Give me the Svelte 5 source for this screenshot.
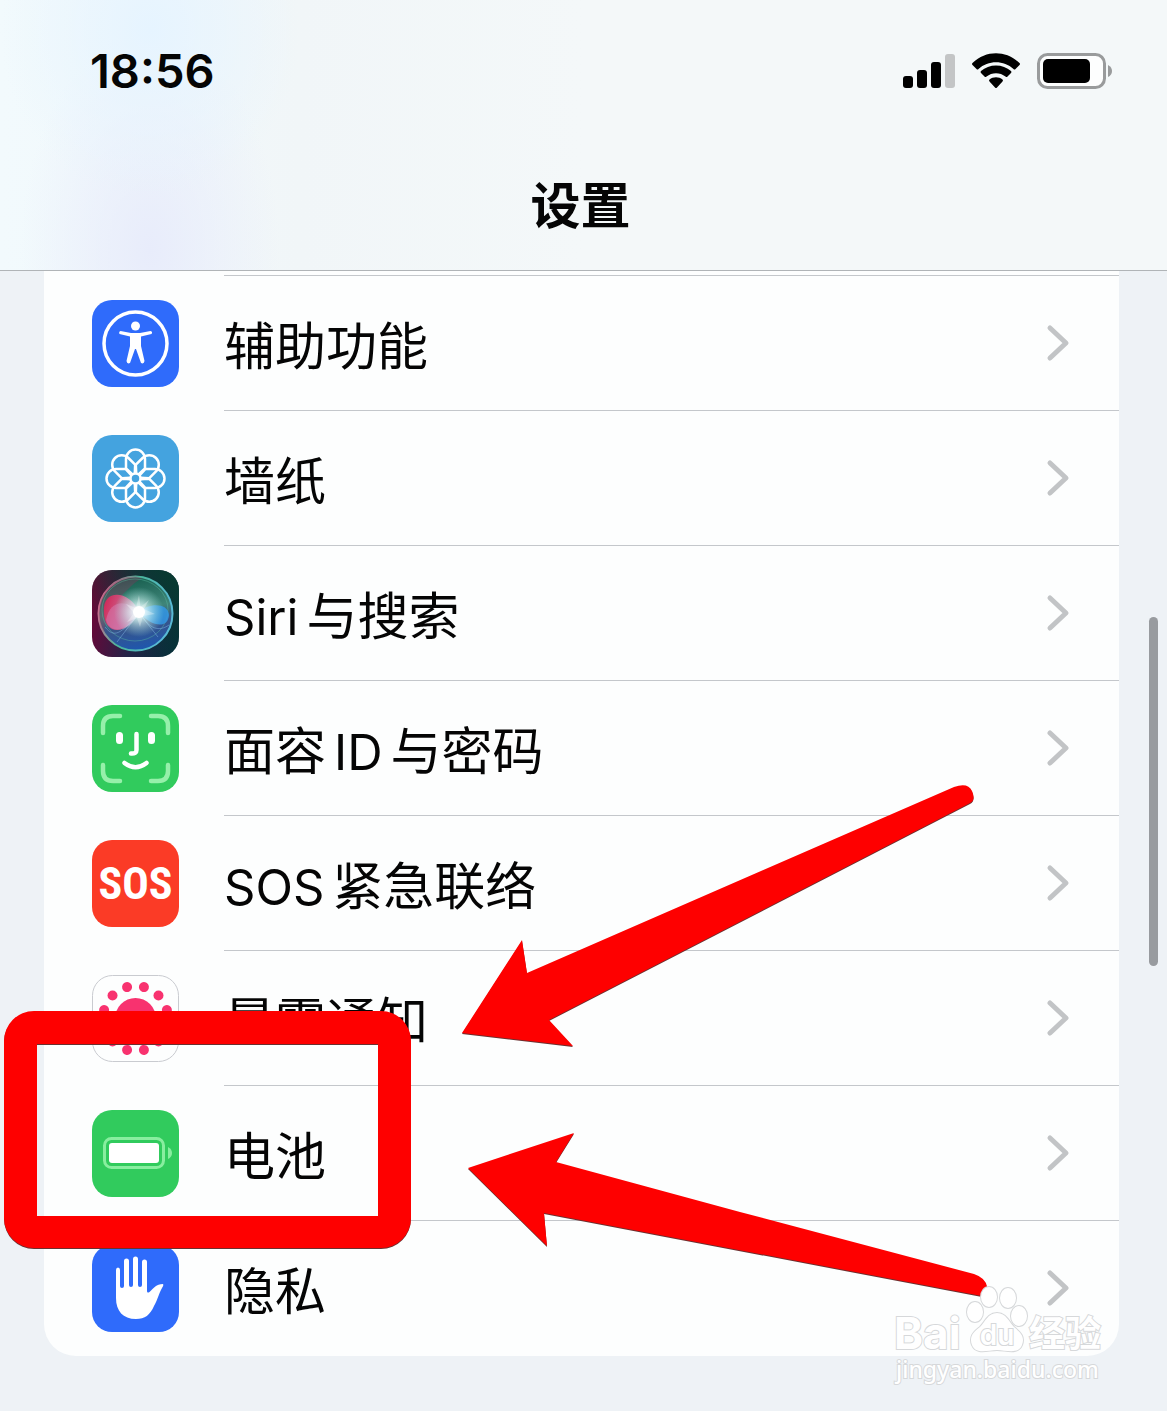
<script lang="ts">
	type Row = { id: string; label: string };

	const rows: Row[] = [
		{ id: 'accessibility', label: '辅助功能' },
		{ id: 'wallpaper', label: '墙纸' },
		{ id: 'siri', label: 'Siri与搜索' },
		{ id: 'faceid', label: '面容ID与密码' },
		{ id: 'sos', label: 'SOS紧急联络' },
		{ id: 'exposure', label: '暴露通知' },
		{ id: 'battery', label: '电池' },
		{ id: 'privacy', label: '隐私' }
	];

	const petals = [0, 45, 90, 135, 180, 225, 270, 315];
	const dots = Array.from({ length: 12 }, (_, i) => 15 + i * 30);

	// split a label into latin and CJK runs so the two get some air between them
	const runs = (label: string) => label.match(/[A-Za-z]+|[^A-Za-z]+/g) ?? [];
</script>

<svelte:head>
	<title>设置</title>
</svelte:head>

<div class="screen">
	<header>
		<div class="status">
			<time>18:56</time>
			<div class="indicators">
				<svg width="52" height="36" viewBox="0 0 52 36" aria-label="signal">
					<rect x="0" y="23" width="10" height="12" rx="3" />
					<rect x="14" y="17" width="10" height="18" rx="3" />
					<rect x="28" y="9" width="10" height="26" rx="3" />
					<rect x="42" y="1" width="10" height="34" rx="3" fill="#c3c5c6" />
				</svg>
				<svg width="50" height="36" viewBox="0 0 50 36" aria-label="wifi">
					<path d="M1.500 12 Q.5 11 1.500 10 C15 -3 35 -3 48.500 10 Q49.500 11 48.500 12 L44.500 16 Q43.500 17 42.500 16 C33 7 17 7 7.500 16 Q6.500 17 5.500 16 Z" />
					<path d="M10 20 Q9 19 10 18 C18 10.500 32 10.500 40 18 Q41 19 40 20 L36.500 23.500 Q35.500 24.500 34.500 23.500 C29 19 21 19 15.500 23.500 Q14.500 24.500 13.500 23.500 Z" />
					<path d="M18.500 28.500 Q17.500 27.500 18.500 26.500 C22 23.500 28 23.500 31.500 26.500 Q32.500 27.500 31.500 28.500 L26 34.500 Q25 35.500 24 34.500 Z" />
				</svg>
				<svg width="76" height="36" viewBox="0 0 76 36" aria-label="battery">
					<rect x="1.500" y="1.500" width="66" height="33" rx="9" fill="#fdfefe" stroke="#999b9c" stroke-width="3" />
					<rect x="6" y="6" width="47" height="24" rx="5" />
					<path d="M71 12 Q75 14 75 18 Q75 22 71 24 Z" fill="#999b9c" />
				</svg>
			</div>
		</div>
		<h1>设置</h1>
	</header>

	<main>
		<ul>
			{#each rows as row (row.id)}
				<li>
					<a href="#{row.id}">
						<svg class="icon" viewBox="0 0 87 87" aria-hidden="true">
							{#if row.id === 'accessibility'}
								<rect width="87" height="87" rx="20" fill="#2f6bfb" />
								<circle cx="43.500" cy="43.500" r="31.500" fill="none" stroke="#fff" stroke-width="3.500" />
								<circle cx="43.500" cy="26" r="4.500" fill="#fff" />
								<path d="M28.500 31 L39 33 H48 L58.500 31 Q61 31.500 59.500 34 L49 36.500 V46 L52.500 61 Q52 64.500 49 63 L44 49 H43 L38 63 Q35 64.500 34.500 61 L38 46 V36.500 L27.500 34 Q26.500 31.500 28.500 31 Z" fill="#fff" />
							{:else if row.id === 'wallpaper'}
								<rect width="87" height="87" rx="20" fill="#44a3df" />
								<g fill="none" stroke="#fff" stroke-width="2.500" stroke-linejoin="round">
									{#each petals as angle}
										<path d="M-3 -4 L-9.500 -10 V-19.500 A9.500 9.500 0 0 1 9.500 -19.500 V-10 L3 -4" transform="translate(43.500 43.500) rotate({angle})" />
									{/each}
									<circle cx="43.500" cy="43.500" r="5" />
								</g>
							{:else if row.id === 'siri'}
								<defs>
									<linearGradient id="siri-bg" x1="0" y1="0.400" x2="1" y2="0.600">
										<stop offset="0" stop-color="#6b0637" />
										<stop offset="0.500" stop-color="#242347" />
										<stop offset="1" stop-color="#082c3d" />
									</linearGradient>
									<linearGradient id="siri-orb" x1="0.400" y1="0" x2="0.600" y2="1">
										<stop offset="0" stop-color="#155c4c" />
										<stop offset="0.450" stop-color="#3f8579" />
										<stop offset="0.650" stop-color="#395487" />
										<stop offset="1" stop-color="#1d57b0" />
									</linearGradient>
									<linearGradient id="siri-ring" x1="0" y1="0" x2="1" y2="0.300">
										<stop offset="0" stop-color="#f0588a" />
										<stop offset="0.500" stop-color="#49b69a" />
										<stop offset="1" stop-color="#58b9d5" />
									</linearGradient>
									<linearGradient id="siri-pink" x1="0" y1="0" x2="1" y2="0.300">
										<stop offset="0" stop-color="#e8174f" />
										<stop offset="1" stop-color="#dc91bd" />
									</linearGradient>
									<linearGradient id="siri-corner" x1="1" y1="0" x2="0.300" y2="0.800">
										<stop offset="0" stop-color="#073b2f" />
										<stop offset="1" stop-color="#073b2f" stop-opacity="0" />
									</linearGradient>
									<radialGradient id="siri-glow">
										<stop offset="0" stop-color="#fff" />
										<stop offset="0.250" stop-color="#eaffff" stop-opacity="0.900" />
										<stop offset="1" stop-color="#a0e8e0" stop-opacity="0" />
									</radialGradient>
								</defs>
								<rect width="87" height="87" rx="20" fill="url(#siri-bg)" />
								<rect width="87" height="87" rx="20" fill="url(#siri-corner)" />
								<circle cx="43.500" cy="43.500" r="37" fill="url(#siri-orb)" stroke="url(#siri-ring)" stroke-width="2" />
								<path d="M11 26 C20 8 38 4 50 8 C36 16 14 40 12 62 C5 50 6 36 11 26 Z" fill="#a02a5e" opacity="0.300" />
								<ellipse cx="43" cy="40" rx="33" ry="31" fill="none" stroke="#5dc0a4" opacity="0.400" />
								<path d="M47 42 C38 20 10 18 12 42 C12 68 38 64 47 42 Z" fill="url(#siri-pink)" opacity="0.850" />
								<path d="M14 50 C18 28 36 30 47 42 C38 60 18 66 14 50 Z" fill="#d77fb5" opacity="0.500" />
								<path d="M47 42 C56 33 76 32 77 45 C76 60 58 56 47 42 Z" fill="#3298e4" opacity="0.850" />
								<path d="M47 43 L25 72 M47 43 L66 67 M47 43 C28 65 22 68 13 57 M49 44 C57 59 67 62 77 55" fill="none" stroke="#91c9f5" opacity="0.400" />
								<circle cx="47" cy="42" r="25" fill="url(#siri-glow)" opacity="0.900" />
								<path d="M47 25 L48.500 37 L57 30 L52 39 L63 44 L51 46 L48 57 L45 48 L35 52 L42 43 L34 34 L44 38 Z" fill="#fff" opacity="0.300" />
								<circle cx="47" cy="42" r="6" fill="#fff" />
							{:else if row.id === 'faceid'}
								<rect width="87" height="87" rx="20" fill="#31cb5d" />
								<path d="M11 28 V21 Q11 11 21 11 H28 M59 11 H66 Q76 11 76 21 V28 M76 60 V66 Q76 76 66 76 H59 M28 76 H21 Q11 76 11 66 V60" fill="none" stroke="#96f0aa" stroke-width="4.500" stroke-linecap="round" />
								<path d="M27.500 30.500 V35.500 M59.500 30.500 V35.500" stroke="#fff" stroke-width="7" stroke-linecap="round" />
								<path d="M44.500 29 V45 Q44.500 49 39 48.500 M32.500 58 Q43.500 66.500 54.500 58" fill="none" stroke="#fff" stroke-width="4.500" stroke-linecap="round" />
							{:else if row.id === 'sos'}
								<rect width="87" height="87" rx="20" fill="#fb3b26" />
								<text class="sos" x="43.500" y="59" text-anchor="middle">SOS</text>
							{:else if row.id === 'exposure'}
								<rect x="0.500" y="0.500" width="86" height="86" rx="20" fill="#fdfefe" stroke="#c9cbd0" />
								<circle cx="43.500" cy="43.500" r="20.500" fill="#f8326f" />
								{#each dots as angle}
									<circle cx="43.500" cy="11" r="5" fill="#f8326f" transform="rotate({angle} 43.500 43.500)" />
								{/each}
							{:else if row.id === 'battery'}
								<rect width="87" height="87" rx="20" fill="#31cb5d" />
								<rect x="12.500" y="28.500" width="59" height="29" rx="7" fill="none" stroke="#88ee9f" stroke-width="3" />
								<rect x="17" y="33" width="50" height="20" rx="3" fill="#fff" />
								<path d="M76 37 Q80 39 80 43 Q80 47 76 49 Z" fill="#88ee9f" />
							{:else}
								<rect width="87" height="87" rx="20" fill="#2f6bfb" />
								<path d="M24 25 Q24 22.500 26 22.500 Q28 22.500 28 25 V41 Q28 43 30 43 Q32 43 32 41 V16 Q32 13.500 34.500 13.500 Q37 13.500 37 16 V40 Q37 42 39 42 Q41 42 41 40 V14 Q41 11.500 43.500 11.500 Q46 11.500 46 14 V40 Q46 42 48 42 Q50 42 50 40 V17 Q50 14.500 52.500 14.500 Q55 14.500 55 17 V46 Q55 48.500 57.500 47 C62 43 64 39 71 39 Q72 40 70 43 C67 48 66 54 62 61 C58 70 53 74 44 74 C31 74 24 66 24 53 Z" fill="#fff" />
							{/if}
						</svg>
						<span class="body">
							<span class="label">
								{#each runs(row.label) as run}<span class:latin={/[A-Za-z]/.test(run)}>{run}</span>{/each}
							</span>
							<svg class="chevron" width="24" height="38" viewBox="0 0 24 38" aria-hidden="true">
								<path d="M4 4 L20 19 L4 34" />
							</svg>
						</span>
					</a>
				</li>
			{/each}
		</ul>
	</main>

	<div class="scrollbar"></div>

	<!-- hand-drawn markup and the watermark lie over the whole page -->
	<svg class="overlay" viewBox="0 0 1167 1411">
		<g class="marks">
			<path fill-rule="evenodd" d="M34 1011 H381 A30 30 0 0 1 411 1041 V1218 A30 30 0 0 1 381 1248 H34 A30 30 0 0 1 4 1218 V1041 A30 30 0 0 1 34 1011 Z M37 1044 V1216 H378 V1044 Z" />
			<path d="M462 1033 L522 940 L527 973 L954 787 Q968 782 972 791 Q976 800 970 803 L549 1020 L573 1046 Z" />
			<path d="M468 1168 L574 1133 L556 1162 L740 1212 L974 1274 Q986 1278 987 1287 Q985 1294 982 1296 L544 1213 L547 1246 Z" />
		</g>
		<g class="watermark">
			<text class="bai" x="894" y="1349">Bai</text>
			<ellipse cx="975" cy="1312" rx="8" ry="10" />
			<ellipse cx="989" cy="1297" rx="8" ry="10" />
			<ellipse cx="1008" cy="1298" rx="8" ry="10" />
			<ellipse cx="1019" cy="1316" rx="8" ry="10" />
			<path d="M997 1313 C1006 1313 1009 1322 1014 1327 C1021 1333 1025 1337 1022 1345 C1018 1355 1006 1350 997 1350 C988 1350 976 1355 972 1345 C969 1337 973 1332 980 1327 C985 1322 988 1313 997 1313 Z" />
			<text class="du" x="997" y="1345" text-anchor="middle">du</text>
			<text class="jingyan" x="1029" y="1347">经验</text>
			<text class="url" x="896" y="1378">jingyan.baidu.com</text>
		</g>
	</svg>
</div>

<style>
	:global(body) {
		margin: 0;
		background: #eef2f6;
	}

	.screen {
		position: relative;
		min-height: 100vh;
		overflow: hidden;
		font-family: Inter, 'Noto Sans CJK SC', sans-serif;
		color: #050505;
	}

	header {
		box-sizing: border-box;
		height: 271px;
		border-bottom: 1px solid #b0b4b7;
		background:
			radial-gradient(ellipse 150px 170px at 150px 30px, #e6f4ff, transparent),
			radial-gradient(ellipse 130px 220px at 150px 250px, #e8ecfb, transparent),
			linear-gradient(90deg, #f2fafd, #f1f6f8 300px, #f4f8f9 50%);
	}

	.status {
		display: flex;
		align-items: center;
		justify-content: space-between;
		height: 142px;
		padding: 0 54px 0 90px;
	}
	time {
		font-size: 47px;
		font-weight: 600;
		line-height: 60px;
	}
	.indicators {
		display: flex;
		align-items: center;
		gap: 16px;
	}

	h1 {
		margin: 0;
		padding-top: 28px;
		padding-right: 6px;
		font-size: 50px;
		font-weight: 600;
		line-height: 72px;
		text-align: center;
	}

	main {
		padding: 0 48px 55px 44px;
	}
	ul {
		list-style: none;
		margin: 0;
		padding: 4px 0 1px;
		background: #fdfefe;
		border-radius: 0 0 32px 32px;
	}
	a {
		display: flex;
		align-items: center;
		gap: 45px;
		padding-left: 48px;
		color: inherit;
		text-decoration: none;
	}
	.icon {
		flex: none;
		width: 87px;
		height: 87px;
		padding-top: 2px;
	}
	.body {
		flex: 1;
		display: flex;
		align-items: center;
		justify-content: space-between;
		box-sizing: border-box;
		height: 135px;
		padding-right: 49px;
		border-top: 1px solid #c4c7cb;
	}
	.label {
		padding-top: 8px;
		font-size: 51px;
		line-height: 72px;
	}
	.latin {
		margin: 0 8px;
		font-size: 49px;
	}
	.latin:first-child {
		margin-left: 0;
	}
	.chevron path {
		fill: none;
		stroke: #c2c4c6;
		stroke-width: 5;
		stroke-linecap: round;
		stroke-linejoin: round;
	}
	.sos {
		font-family: 'Roboto Condensed', Roboto, sans-serif;
		font-size: 44px;
		font-weight: 700;
		fill: #fff;
	}

	.scrollbar {
		position: absolute;
		top: 617px;
		right: 9px;
		width: 9px;
		height: 349px;
		border-radius: 5px;
		background: #989b9f;
	}

	.overlay {
		position: absolute;
		top: 0;
		left: 0;
		width: 100%;
		pointer-events: none;
	}
	.marks {
		fill: #fe0000;
		filter: drop-shadow(0 1px 0 #6b3030);
	}
	.watermark {
		fill: #fff;
		stroke: #d6d8da;
		stroke-width: 2;
		paint-order: stroke;
	}
	.bai {
		font-size: 44px;
		font-weight: 700;
	}
	.du {
		font-size: 28px;
		font-weight: 600;
	}
	.jingyan {
		font-size: 36px;
		font-weight: 700;
	}
	.url {
		font-family: 'Noto Sans', sans-serif;
		font-size: 23px;
		font-weight: 500;
	}
</style>
